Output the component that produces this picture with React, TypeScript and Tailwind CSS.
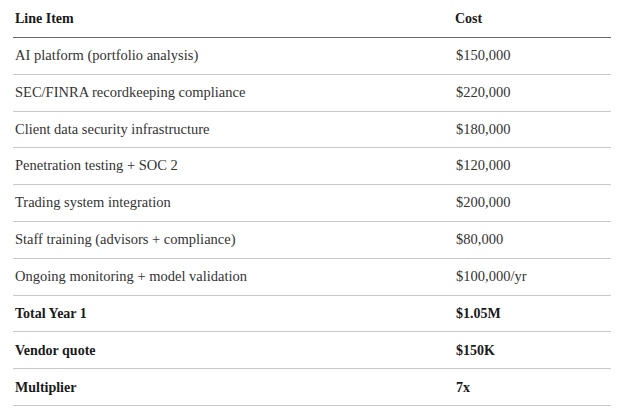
import React from "react";

const rows: [string, string][] = [
  ["AI platform (portfolio analysis)", "$150,000"],
  ["SEC/FINRA recordkeeping compliance", "$220,000"],
  ["Client data security infrastructure", "$180,000"],
  ["Penetration testing + SOC 2", "$120,000"],
  ["Trading system integration", "$200,000"],
  ["Staff training (advisors + compliance)", "$80,000"],
  ["Ongoing monitoring + model validation", "$100,000/yr"],
];

const totals: [string, string][] = [
  ["Total Year 1", "$1.05M"],
  ["Vendor quote", "$150K"],
  ["Multiplier", "7x"],
];

export default function App() {
  return (
    <div className="w-[620px] h-[417px] bg-white pl-[13px] pr-[9px] font-['Liberation_Serif',serif] text-[14.5px] text-[#333]">
      <table className="w-full border-collapse">
        <thead>
          <tr className="h-[37.5px] border-b-[1.5px] border-[#6b6b6b]">
            <th className="text-left font-bold text-[14px] text-[#1a1a1a] pl-[2px] w-[442px]">Line Item</th>
            <th className="text-left font-bold text-[14px] text-[#1a1a1a] pl-0">Cost</th>
          </tr>
        </thead>
        <tbody>
          {rows.map(([a, b]) => (
            <tr key={a} className="h-[36.8px] border-b border-[#c8c8c8]">
              <td className="pl-[2px]">{a}</td>
              <td className="pl-[1px]">{b}</td>
            </tr>
          ))}
          {totals.map(([a, b]) => (
            <tr key={a} className="h-[36.8px] border-b border-[#c8c8c8] font-bold text-[14px] text-[#1a1a1a]">
              <td className="pl-[2px]">{a}</td>
              <td className="pl-[1px]">{b}</td>
            </tr>
          ))}
        </tbody>
      </table>
    </div>
  );
}
